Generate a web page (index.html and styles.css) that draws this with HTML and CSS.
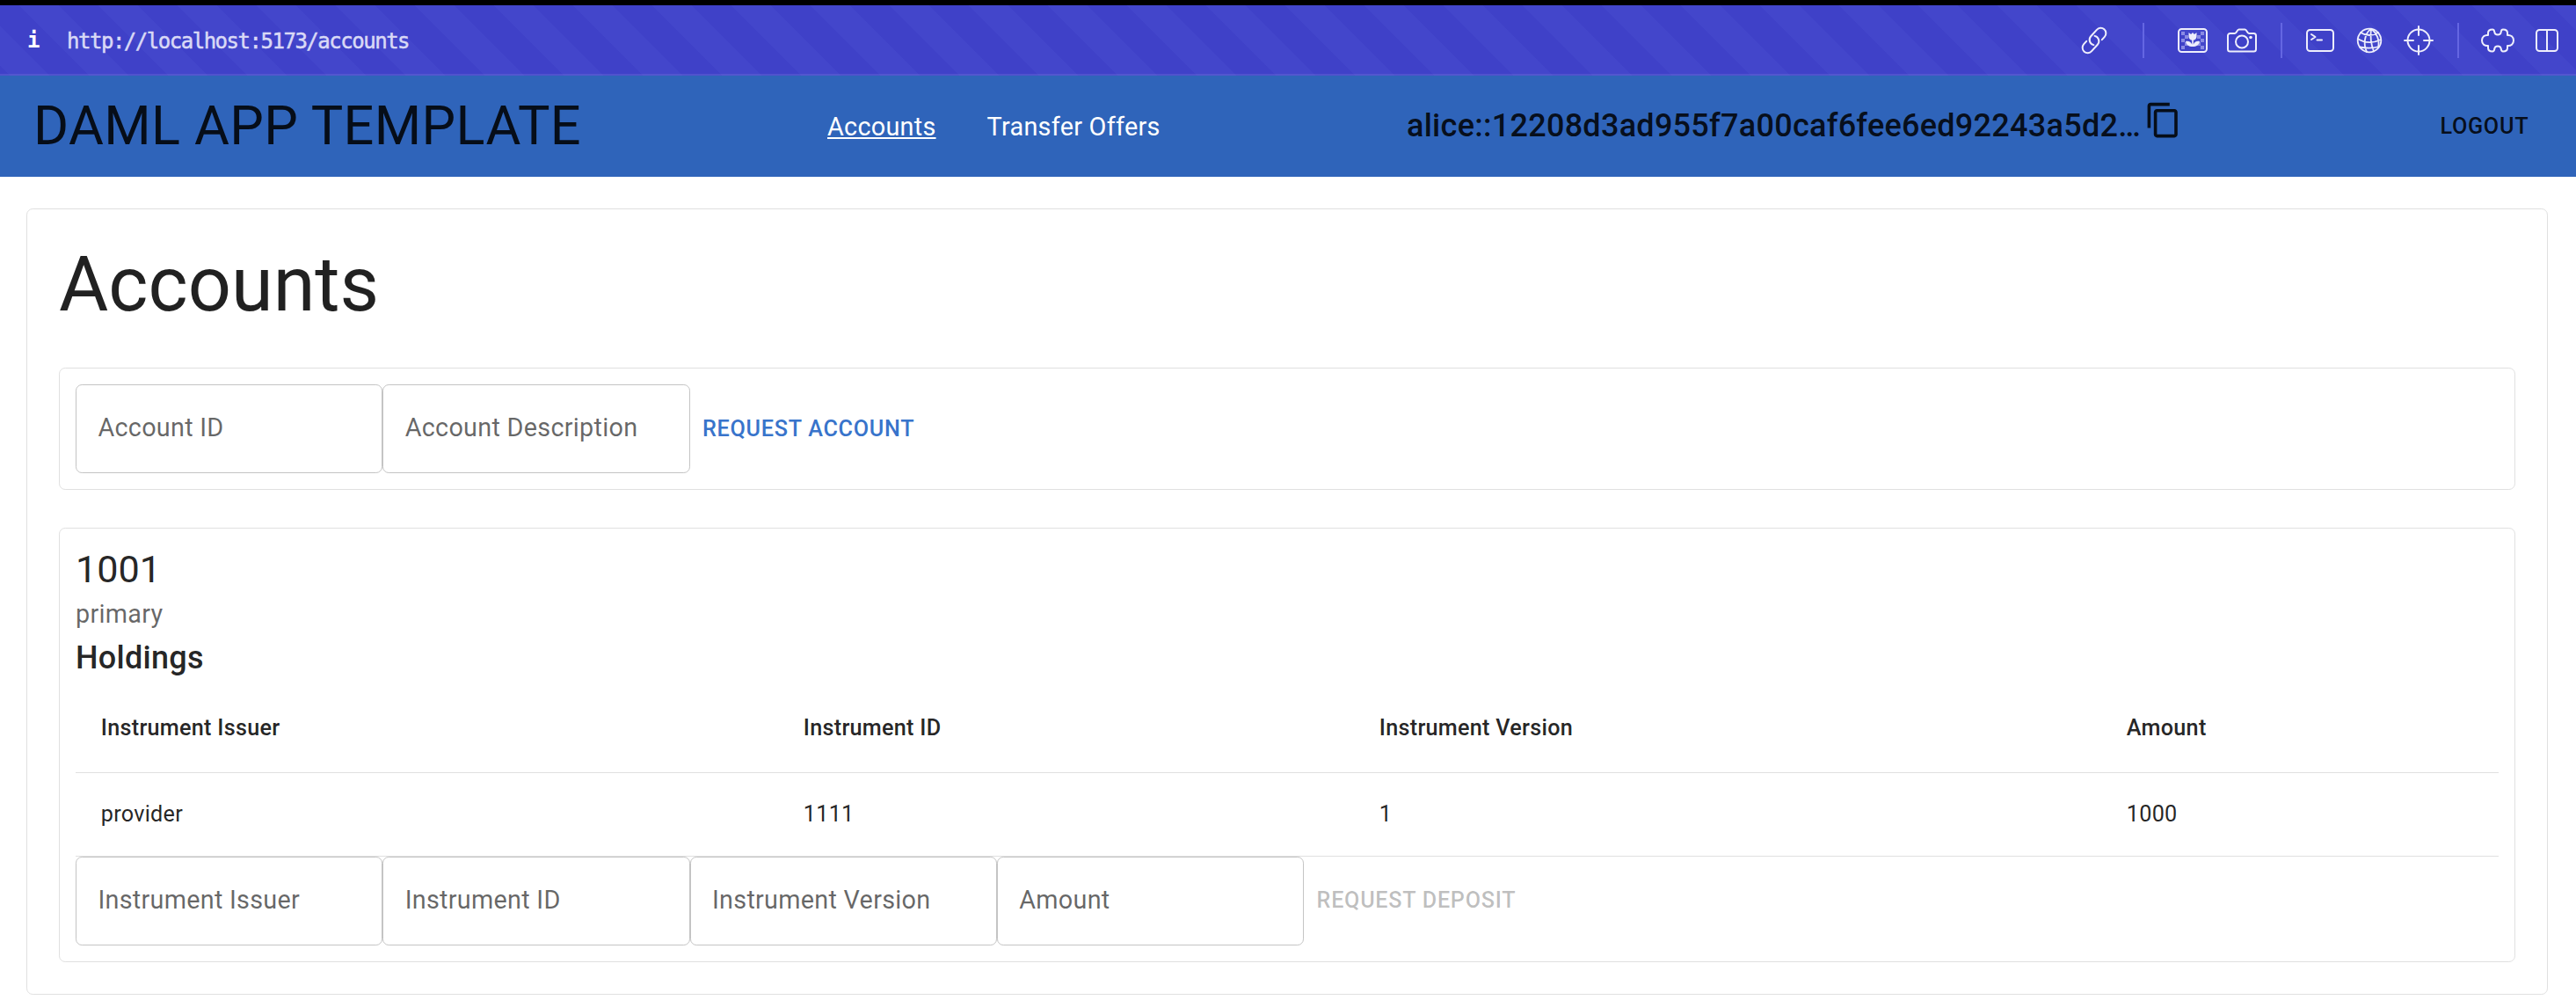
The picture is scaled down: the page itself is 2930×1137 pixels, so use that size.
FILE: index.html
```html
<!DOCTYPE html>
<html lang="en">
<head>
<meta charset="utf-8">
<title>Daml App Template</title>
<link rel="stylesheet" href="styles.css">
</head>
<body>
<div class="urlbar">
  <span class="info">i</span>
  <span class="url">http://localhost:5173/accounts</span>
  <div class="tools">
    <svg class="ic link" width="40" height="40" viewBox="0 0 40 40"><g transform="rotate(-48 20 20)"><path d="M13.500 14H9a6 6 0 0 0 0 12H19a6 6 0 0 0 5.200-9"/><path d="M26.500 26H31a6 6 0 0 0 0-12H21a6 6 0 0 0-5.200 9"/></g></svg>
    <i class="sep"></i>
    <svg class="ic flower" width="34" height="28" viewBox="0 0 34 28"><g class="chk"><path d="M4 4h4v4H4zM8 8h4v4H8zM4 12h4v4H4zM8 16h4v4H8zM4 20h4v4H4zM26 4h4v4h-4zM22 8h4v4h-4zM26 12h4v4h-4zM22 16h4v4h-4zM26 20h4v4h-4z"/></g><rect x="1" y="1" width="32" height="26" rx="3.500"/><path class="fill" d="M12.500 5l2.600 2 1.900-2 1.900 2 2.600-2v4.500a4.500 4.500 0 0 1-3.700 4.200v4.800c1-2.500 4-4.500 7.200-3.500-1 4-3.500 6-8 6s-7-2-8-6c3.200-1 6.200 1 7.200 3.500v-4.800a4.500 4.500 0 0 1-3.700-4.200z"/></svg>
    <svg class="ic camera" width="34" height="28" viewBox="0 0 34 28"><path d="M3.500 6H9c2 0 2.500-4.500 4.500-4.500h7C22.500 1.500 23 6 25 6h5.500A2.500 2.500 0 0 1 33 8.500V24a2.500 2.500 0 0 1-2.500 2.500h-27A2.500 2.500 0 0 1 1 24V8.500A2.500 2.500 0 0 1 3.500 6z"/><circle cx="17" cy="15.500" r="7"/><circle class="fill" cx="27" cy="10.500" r="1.800"/></svg>
    <i class="sep"></i>
    <svg class="ic term" width="32" height="26" viewBox="0 0 32 26"><rect x="1" y="1" width="30" height="24" rx="3.500"/><path d="M6 6l4.500 3L6 12M12.500 12.500h5.500"/></svg>
    <svg class="ic globe" width="30" height="30" viewBox="0 0 30 30"><circle cx="15" cy="15" r="13.300"/><path d="M17 1.700C9 7 8 20 12 28M17 1.700C16 9 17 20 20 27.500M17 1.700C23 6 27 14 25 23M5 6c6 4 14 4 20 0M1.700 13c8 5 18 5 26.500 1M4 22.500c7 1.500 15 1.500 22-.5"/></svg>
    <svg class="ic cross" width="34" height="34" viewBox="0 0 34 34"><circle cx="17" cy="17" r="12.500"/><path d="M17 1v10M17 23v10M1 17h10M23 17h10"/></svg>
    <i class="sep"></i>
    <svg class="ic puzzle" width="38" height="28" viewBox="0 0 38 28"><path d="M8 8V5.500C8 3 10 1.500 13 1.500c2 0 2 1 2.300 3 .4 4 7 4 7.400 0 .3-2 .3-3 2.300-3 3 0 5 1.500 5 4V8c4-.5 7 2 7 6s-3 6.500-7 6v2.500c0 2.500-2 4-5 4-2 0-2-1-2.300-3-.4-4-7-4-7.400 0-.3 2-.3 3-2.300 3-3 0-5-1.500-5-4V20c-4 .5-7-2-7-6s3-6.500 7-6z"/></svg>
    <svg class="ic panel" width="26" height="26" viewBox="0 0 26 26"><rect x="1" y="1" width="24" height="24" rx="3.500"/><path d="M13 1v24"/></svg>
  </div>
</div>
<header class="appbar">
  <div class="brand">DAML APP TEMPLATE</div>
  <nav class="nav"><a class="active" href="#">Accounts</a><a href="#">Transfer Offers</a></nav>
  <div class="party"><span>alice::12208d3ad955f7a00caf6fee6ed92243a5d2…</span><svg class="copy" viewBox="0 0 24 24"><path d="M16 1H4c-1.100 0-2 .9-2 2v14h2V3h12V1zm3 4H8c-1.100 0-2 .9-2 2v14c0 1.100.9 2 2 2h11c1.100 0 2-.9 2-2V7c0-1.100-.9-2-2-2zm0 16H8V7h11v14z"/></svg></div>
  <button class="btn logout">LOGOUT</button>
</header>
<main class="card page">
  <h1 class="title">Accounts</h1>
  <section class="card">
    <div class="form">
      <label class="field">Account ID</label>
      <label class="field">Account Description</label>
      <button class="btn primary">REQUEST ACCOUNT</button>
    </div>
  </section>
  <section class="card">
    <h2 class="acct">1001</h2>
    <p class="desc">primary</p>
    <h3 class="sub">Holdings</h3>
    <div class="row head"><span>Instrument Issuer</span><span>Instrument ID</span><span>Instrument Version</span><span>Amount</span></div>
    <div class="row"><span>provider</span><span>1111</span><span>1</span><span>1000</span></div>
    <div class="form">
      <label class="field">Instrument Issuer</label>
      <label class="field">Instrument ID</label>
      <label class="field">Instrument Version</label>
      <label class="field">Amount</label>
      <button class="btn" disabled>REQUEST DEPOSIT</button>
    </div>
  </section>
</main>
</body>
</html>
```
FILE: styles.css
```css
* { box-sizing: border-box; margin: 0; }
html { font-size: 28.8px; }
body {
  background: #fff;
  color: rgba(0, 0, 0, .87);
  font-family: Roboto, "Liberation Sans", sans-serif;
  letter-spacing: .00938em;
  overflow: hidden;
}

/* Browser URL bar */
.urlbar {
  height: 86px;
  border-top: 6px solid #000;
  box-shadow: inset 0 -2px rgba(255, 255, 255, .09);
  background: repeating-linear-gradient(45deg, #3f41c8 0 8.1px, #4346cb 8.1px 39.9px, #3f41c8 39.9px 63.64px) padding-box;
  display: flex;
  align-items: center;
  color: #f0f0ff;
  font-family: "DejaVu Sans Mono", monospace;
  letter-spacing: 0;
}
.info { width: 76px; padding-left: 31px; font-size: 24px; font-weight: 700; color: #fff; }
.url { font-size: 24px; letter-spacing: -1.480px; color: #d9d9f6; white-space: nowrap; -webkit-text-stroke: .5px #d9d9f6; padding-top: 1px; }
.tools { margin-left: auto; display: flex; align-items: center; height: 100%; padding-right: 20.500px; }
.ic { flex: none; fill: none; stroke: #eeeefc; stroke-width: 2; stroke-linecap: round; stroke-linejoin: round; }
.ic .fill { fill: #eeeefc; stroke: none; }
.chk { fill: #8a8be3; stroke: none; }
.sep { flex: none; width: 2px; height: 40px; background: #6466e2; }
.link { margin-right: 35px; }
.flower { margin: 0 22px 0 38px; }
.camera { margin-right: 27px; }
.term { margin: 0 25px 0 27px; }
.globe { margin-right: 24px; stroke-width: 1.8; }
.cross { margin-right: 27px; }
.puzzle { margin: 0 24px 0 25px; }

/* App bar */
.appbar {
  height: 4rem;
  background: #2f64ba;
  display: grid;
  grid-template-columns: 903px 659px 1186px auto;
  align-items: center;
  padding-left: 38px;
}
.brand { font-size: 2.125rem; line-height: 1.235; letter-spacing: .0065em; }
.nav { display: flex; gap: 58px; }
.nav a { color: #fff; text-decoration: none; }
.nav .active { text-decoration: underline; }
.party { display: flex; align-items: flex-start; font-size: 1.25rem; line-height: 1.6; font-weight: 500; letter-spacing: .0075em; }
.copy { width: 1.5rem; height: 1.5rem; fill: currentColor; margin-left: 4px; }
.logout { justify-self: start; margin-left: -25px; }

.btn {
  border: 0;
  background: none;
  padding: 0 .5rem;
  font: 500 .875rem/1.75 Roboto, "Liberation Sans", sans-serif;
  letter-spacing: .02857em;
  color: rgba(0, 0, 0, .87);
}
.btn.primary { color: #3874cb; }
.btn:disabled { color: rgba(0, 0, 0, .26); }

/* Cards */
.card { border: 1px solid #e0e0e0; border-radius: .25rem; padding: .625rem; }
.page { margin: 1.25rem 32px 0 30px; padding: 1.25rem 36px; display: flex; flex-direction: column; gap: 1.5rem; }
.title { font-size: 3rem; line-height: 1.167; font-weight: 400; letter-spacing: 0; }

.form { display: flex; align-items: center; }
.field {
  width: 349.3px;
  height: 3.5rem;
  border: 1px solid #c4c4c4;
  border-radius: .25rem;
  padding: 25px 24.4px 0;
  line-height: 1.6rem;
  color: rgba(0, 0, 0, .6);
  white-space: nowrap;
}

.acct { font-size: 1.5rem; line-height: 1.334; font-weight: 400; letter-spacing: 0; }
.desc { line-height: 1.5; color: rgba(0, 0, 0, .6); }
.sub { font-size: 1.25rem; line-height: 1.6; font-weight: 500; letter-spacing: .0075em; }

.row {
  display: grid;
  grid-template-columns: 799px 655px 850px 1fr;
  border-bottom: 1px solid #e0e0e0;
  padding: 1rem 0;
  font-size: .875rem;
  line-height: 1.43;
  letter-spacing: .01071em;
}
.row span { padding-left: 1rem; }
.head { font-weight: 500; line-height: 1.5rem; }
```
